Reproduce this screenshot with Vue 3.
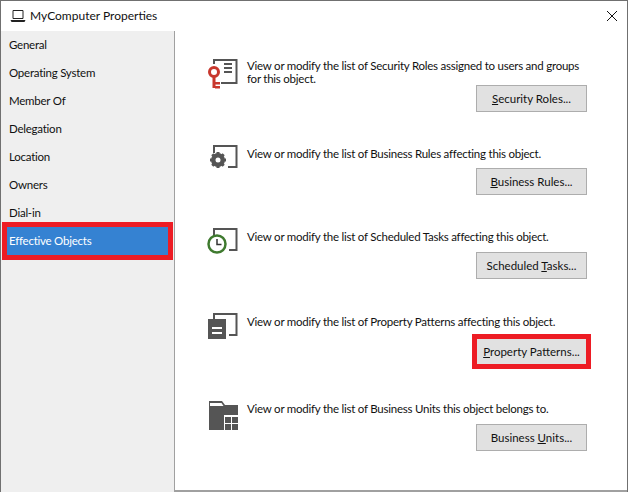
<script setup>
const tabs = ['General', 'Operating System', 'Member Of', 'Delegation', 'Location', 'Owners', 'Dial-in', 'Effective Objects']
const sections = [
  { id: 'key', text: 'View or modify the list of Security Roles assigned to users and groups for this object.', pre: '', key: 'S', post: 'ecurity Roles...', height: 53, top: 28 },
  { id: 'gear', text: 'View or modify the list of Business Rules affecting this object.', pre: '', key: 'B', post: 'usiness Rules...', height: 48, top: 35 },
  { id: 'clock', text: 'View or modify the list of Scheduled Tasks affecting this object.', pre: 'Scheduled ', key: 'T', post: 'asks...', height: 49, top: 35 },
  { id: 'doc', text: 'View or modify the list of Property Patterns affecting this object.', pre: '', key: 'P', post: 'roperty Patterns...', height: 50, top: 36, marked: true },
  { id: 'folder', text: 'View or modify the list of Business Units this object belongs to.', pre: 'Business ', key: 'U', post: 'nits...', height: 49, top: 37 }
]
</script>

<template>
  <div class="window">
    <header class="titlebar">
      <svg class="title-icon" width="16" height="14" viewBox="0 0 16 14">
        <path d="M3 1.500h10v8H3z" fill="none" stroke="#222" stroke-width="1" />
        <path d="M0.500 11h15l-1 2h-13z" fill="#222" />
      </svg>
      <span class="title">MyComputer Properties</span>
      <svg class="close" width="10" height="10" viewBox="0 0 10 10">
        <path d="M0 0L10 10M10 0L0 10" stroke="#111" stroke-width="1" fill="none" />
      </svg>
    </header>
    <div class="body">
      <nav class="sidebar">
        <div v-for="(tab, i) in tabs" :key="tab" class="tab" :class="{ active: i === tabs.length - 1 }">{{ tab }}</div>
      </nav>
      <main class="content">
        <section v-for="s in sections" :key="s.id" class="row" :style="{ height: s.height + 'px', marginTop: s.top + 'px' }">
          <svg class="icon" width="36" height="36" viewBox="0 0 36 36">
            <template v-if="s.id === 'key'">
              <path d="M10 7V3h22.500v23H17" fill="none" stroke="#555" stroke-width="2" />
              <path d="M20 7h8M20 11h8M20 15h8" stroke="#555" stroke-width="2" />
              <circle cx="10" cy="15" r="4.500" fill="none" stroke="#c8372d" stroke-width="3" />
              <path d="M8.500 19h3v12h-3zM11 25h5v2.500h-5zM11 29h5v2.500h-5z" fill="#c8372d" />
            </template>
            <template v-else-if="s.id === 'gear'">
              <path d="M10 8V1h22.500v21H24" fill="none" stroke="#555" stroke-width="2" />
              <circle cx="14" cy="15" r="5" fill="none" stroke="#555" stroke-width="4" />
              <path d="M14 7v16M6 15h16M8.300 9.300l11.400 11.400M19.700 9.300L8.300 20.700" stroke="#555" stroke-width="3" />
              <circle cx="14" cy="15" r="2.500" fill="#fff" />
            </template>
            <template v-else-if="s.id === 'clock'">
              <path d="M10 8V1h22.500v21H25" fill="none" stroke="#555" stroke-width="2" />
              <circle cx="13" cy="16" r="8.500" fill="#fff" stroke="#3f7a2f" stroke-width="2.500" />
              <path d="M13 11v5.500h4.500" fill="none" stroke="#333" stroke-width="1.500" />
            </template>
            <template v-else-if="s.id === 'doc'">
              <path d="M10 6V1h22.500v21H25" fill="none" stroke="#555" stroke-width="2" />
              <path d="M4 6h18v20H4z" fill="#555" />
              <path d="M8 14h10v2H8zM8 19h10v2H8z" fill="#fff" />
            </template>
            <template v-else>
              <path d="M5 1h13l3 4h13v10H20v15H5z" fill="#555" />
              <path d="M6 3h11.500l2 3H6z" fill="#fff" />
              <path d="M21 17h6v6h-6zM28 17h6v6h-6zM21 24h6v6h-6zM28 24h6v6h-6z" fill="#555" />
            </template>
          </svg>
          <div class="main">
            <p class="text">{{ s.text }}</p>
            <button class="btn" :class="{ marked: s.marked }">{{ s.pre }}<u>{{ s.key }}</u>{{ s.post }}</button>
          </div>
        </section>
      </main>
    </div>
  </div>
</template>

<style>
html, body { margin: 0; background: #fff; }
</style>

<style scoped>
.window {
  width: 628px;
  height: 492px;
  box-sizing: border-box;
  border: 1px solid #707070;
  border-bottom: 0;
  display: flex;
  flex-direction: column;
  font-family: Lato, "Open Sans", sans-serif;
  font-size: 11.5px;
  letter-spacing: -0.24px;
  color: #111;
  background: #fff;
  overflow: hidden;
}
.titlebar {
  height: 30px;
  flex: none;
  display: flex;
  align-items: center;
  padding-left: 9px;
  padding-right: 10px;
}
.title-icon { margin-right: 4px; }
.title { font-size: 12px; letter-spacing: 0; padding-bottom: 1px; }
.close { margin-left: auto; }
.body { flex: 1; display: flex; min-height: 0; }
.sidebar {
  width: 173px;
  flex: none;
  background: #efefef;
  border-right: 1px solid #a0a0a0;
}
.tab {
  height: 28px;
  line-height: 28px;
  padding-left: 8px;
}
.tab.active {
  margin: 0 6px;
  padding-left: 2px;
  background: #3582d2;
  color: #fff;
  outline: 5px solid #ed1c24;
}
.content {
  flex: 1;
  border-bottom: 2px solid #a0a0a0;
  padding: 0 40px 0 29px;
}
.row { display: flex; gap: 7px; }
.icon { flex: none; margin-top: -2px; overflow: visible; }
.main { flex: 1; display: flex; flex-direction: column; }
.text { margin: 0; line-height: 13px; width: 340px; }
.btn {
  margin-top: auto;
  align-self: flex-end;
  width: 111px;
  height: 27px;
  padding: 0;
  border: 1px solid #adadad;
  background: #e1e1e1;
  font: inherit;
  letter-spacing: 0;
  color: #111;
}
.btn.marked {
  outline: 5px solid #ed1c24;
  outline-offset: -1px;
}
</style>
